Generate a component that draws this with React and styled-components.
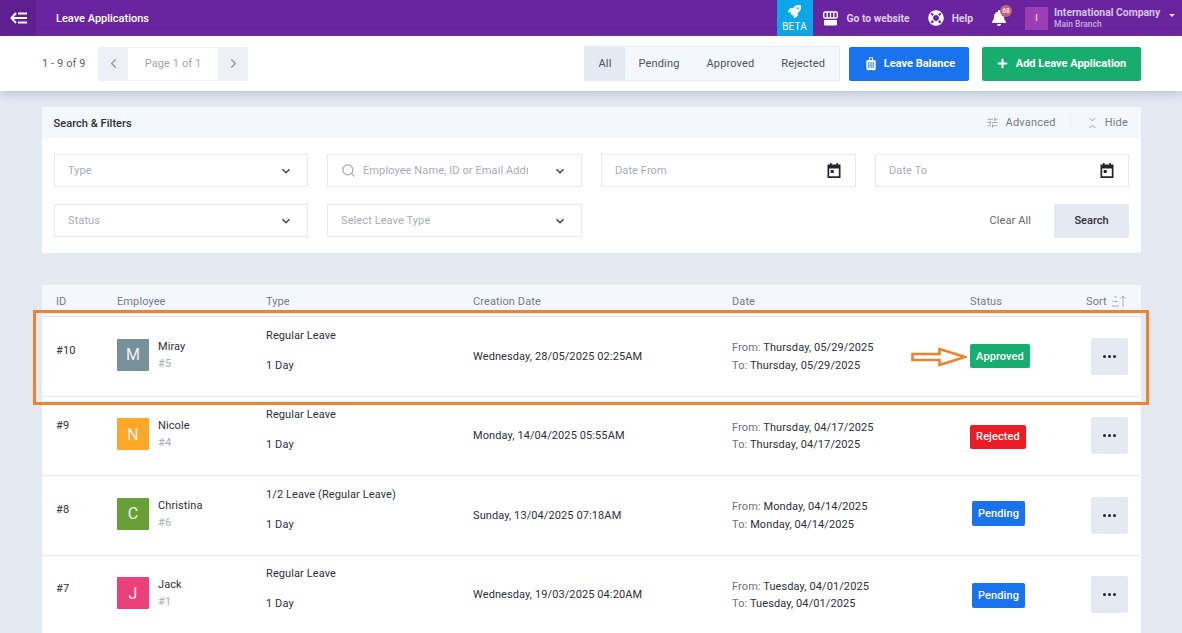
import React from 'react';
import styled, { createGlobalStyle } from 'styled-components';
import { FaBell, FaLifeRing, FaPlus, FaRocket } from 'react-icons/fa';
import { MdKeyboardArrowDown, MdLuggage, MdTune } from 'react-icons/md';
import { ChevronLeft, ChevronRight, Search } from 'lucide-react';

const GlobalStyle = createGlobalStyle`
  html, body {
    margin: 0;
    height: 633px;
    overflow: hidden;
    background: #e4e9f2;
    font-family: Roboto, "Liberation Sans", sans-serif;
  }
  * {
    box-sizing: border-box;
  }
`;

const Page = styled.div`
  width: 1182px;
  height: 633px;
  overflow: hidden;
`;

const TopBar = styled.header`
  display: flex;
  align-items: center;
  height: 36px;
  background: #6b249f;
  color: #fff;
`;

const BackButton = styled.div`
  display: flex;
  align-items: center;
  justify-content: center;
  width: 36px;
  height: 36px;
  background: #5f1f90;
`;

const PageTitle = styled.div`
  margin-left: 20px;
  padding-top: 1px;
  font-size: 11px;
  font-weight: 500;
  flex: 1;
`;

const BetaBox = styled.div`
  display: flex;
  flex-direction: column;
  align-items: center;
  justify-content: center;
  gap: 3px;
  width: 36px;
  height: 36px;
  background: #0ca6e9;
  font-size: 10px;
  letter-spacing: 0.1px;
`;

const TopLink = styled.div`
  display: flex;
  align-items: center;
  gap: 8px;
  margin-left: ${({ $offset }) => $offset}px;
  font-size: 10.3px;
  font-weight: 700;
  color: #dccdea;
`;

const BellWrap = styled.div`
  position: relative;
  display: flex;
  margin-left: 18px;
  color: #fff;
`;

const BellBadge = styled.span`
  position: absolute;
  top: -5px;
  left: 9px;
  width: 12px;
  height: 12px;
  border-radius: 50%;
  background: #c8607a;
  color: #f5e6ea;
  font-size: 6.5px;
  font-weight: 700;
  line-height: 12px;
  text-align: center;
`;

const CompanyAvatar = styled.div`
  display: flex;
  align-items: center;
  justify-content: center;
  width: 23px;
  height: 23px;
  margin-left: 18px;
  background: #9c3fb5;
  color: #e8d5ee;
  font-size: 9px;
  font-weight: 500;
`;

const CompanyInfo = styled.div`
  margin-left: 6px;
  width: 115px;
  color: #d5c5e4;
`;

const CompanyName = styled.div`
  font-size: 10.4px;
  font-weight: 700;
  line-height: 13px;
`;

const CompanyBranch = styled.div`
  font-size: 8.5px;
  font-weight: 500;
  line-height: 11px;
  color: #c5b0da;
`;

const Caret = styled.span`
  width: 0;
  height: 0;
  margin: 0 7px 6px 0;
  border-left: 3.5px solid transparent;
  border-right: 3.5px solid transparent;
  border-top: 3.5px solid #e4d8ee;
`;

const SubHeader = styled.div`
  position: relative;
  display: flex;
  align-items: center;
  height: 55px;
  padding: 0 41px 0 42px;
  background: #fff;
  box-shadow: 0 3px 10px rgba(110, 125, 160, 0.35);
`;

const Count = styled.div`
  width: 56px;
  font-size: 11px;
  letter-spacing: 0.1px;
  color: #5d6174;
`;

const Pager = styled.div`
  display: flex;
  height: 34px;
  border-radius: 2px;
  background: #edf1f5;
  flex: none;
`;

const PagerArrow = styled.div`
  display: flex;
  align-items: center;
  justify-content: center;
  width: 30px;
  color: #8e94a3;
`;

const PagerLabel = styled.div`
  display: flex;
  align-items: center;
  justify-content: center;
  width: 90px;
  margin: 1px 0;
  background: #fff;
  font-size: 11px;
  letter-spacing: 0.1px;
  color: #a3a6b2;
`;

const Tabs = styled.div`
  display: flex;
  height: 35px;
  margin-left: auto;
  padding-right: 0.5px;
  background: #f4f7fb;
  border: 1px solid #e9edf3;
  border-left: 0;
`;

const Tab = styled.div`
  display: flex;
  align-items: center;
  padding: ${({ $active }) => ($active ? '0 13.5px 0 15px' : '0 13.5px')};
  background: ${({ $active }) => ($active ? '#e4e9f2' : 'transparent')};
  font-size: 11px;
  letter-spacing: 0.15px;
  color: #4c5064;
`;

const ActionButton = styled.div`
  display: flex;
  align-items: center;
  justify-content: center;
  gap: ${({ $gap }) => $gap}px;
  width: ${({ $width }) => $width}px;
  height: 34px;
  margin-left: ${({ $offset }) => $offset}px;
  border-radius: 2px;
  background: ${({ $color }) => $color};
  color: #fff;
  font-size: 11px;
  font-weight: 700;
`;

const Content = styled.main`
  padding: 16px 41px 0 42px;
`;

const FilterCard = styled.section`
  background: #fff;
  height: 146px;
`;

const FilterHeader = styled.div`
  display: flex;
  align-items: center;
  height: 31px;
  padding: 0 13px 0 11.5px;
  background: #f4f7fb;
`;

const FilterTitle = styled.div`
  flex: 1;
  padding-top: 1px;
  font-size: 11px;
  font-weight: 500;
  letter-spacing: 0.05px;
  color: #2c2f3c;
`;

const FilterAction = styled.div`
  display: flex;
  align-items: center;
  gap: ${({ $gap }) => $gap}px;
  font-size: 11px;
  letter-spacing: 0.2px;
  color: #767a8c;

  svg {
    color: #a3a7b3;
  }
`;

const Divider = styled.span`
  width: 1px;
  height: 16px;
  margin: 0 18px 0 14px;
  background: #eceff4;
`;

const FilterGrid = styled.div`
  display: grid;
  grid-template-columns: 254px 255px 255px 254px;
  grid-auto-rows: 33px;
  column-gap: 19px;
  row-gap: 17px;
  padding: 16px 12px;
`;

const Field = styled.div`
  display: flex;
  align-items: center;
  padding: 0 13.5px 0 13px;
  border: 1px solid #e6e9ee;
  font-size: 11px;
  letter-spacing: 0.1px;
  color: #a9abb9;
`;

const FieldText = styled.span`
  flex: 1;
  min-width: 0;
  overflow: hidden;
  white-space: nowrap;
`;

const SearchText = styled.span`
  flex: none;
  width: 165px;
  margin-right: auto;
  overflow: hidden;
  white-space: nowrap;
`;

const SearchIcon = styled(Search)`
  flex: none;
  margin-right: 7px;
  color: #a5a8b5;
`;

const DarkArrow = styled(MdKeyboardArrowDown)`
  flex: none;
  color: #3a3d4c;
`;

const CalendarSvg = styled.svg`
  flex: none;
  margin-right: 1px;
  color: #23252f;
`;

const FilterButtons = styled.div`
  grid-column: 3 / span 2;
  display: flex;
  align-items: center;
  justify-content: flex-end;
`;

const ClearAll = styled.div`
  margin-right: 23px;
  font-size: 11px;
  letter-spacing: 0.1px;
  color: #636779;
`;

const SearchButton = styled.div`
  display: flex;
  align-items: center;
  justify-content: center;
  width: 75px;
  height: 34px;
  border-radius: 2px;
  background: #e4e9f2;
  color: #2c2f3c;
  font-size: 11px;
  font-weight: 500;
`;

const Table = styled.section`
  margin-top: 32px;
  background: #fff;
`;

const columns = '61px 149px 207px 259px 238px 121px 1fr';

const HeadRow = styled.div`
  display: grid;
  grid-template-columns: ${columns};
  align-items: center;
  height: 32px;
  padding: 1px 0 0 14px;
  background: #f4f7fb;
  border-bottom: 1px solid #e6e9ee;
  font-size: 11px;
  letter-spacing: 0.1px;
  color: #767a8c;
`;

const SortCell = styled.div`
  display: flex;
  align-items: center;
  gap: 4px;
  margin-left: -5px;

  svg {
    color: #a9adba;
  }
`;

const Row = styled.div`
  position: relative;
  display: grid;
  grid-template-columns: ${columns};
  align-items: center;
  height: 79.5px;
  padding-left: 14px;
  border-bottom: 1px solid #e6e9ee;
  font-size: 11px;
  letter-spacing: 0.1px;
  color: #2c2f3c;
`;

const IdCell = styled.div`
  padding-bottom: ${({ $lift }) => $lift}px;
`;

const Employee = styled.div`
  display: flex;
  gap: 9px;
  padding-bottom: 3px;
`;

const Avatar = styled.div`
  display: flex;
  align-items: center;
  justify-content: center;
  width: 32px;
  height: 32px;
  border-radius: 1px;
  background: ${({ $color }) => $color};
  color: #eef2f0;
  font-size: 16px;
`;

const EmployeeInfo = styled.div`
  padding-top: 1px;
`;

const EmployeeName = styled.div`
  line-height: 13px;
  margin-bottom: 4px;
`;

const EmployeeNo = styled.div`
  line-height: 13px;
  color: #a9abb9;
`;

const TypeCell = styled.div`
  display: flex;
  flex-direction: column;
  gap: 17px;
  padding-bottom: 12px;
  line-height: 13px;
`;

const DateCell = styled.div`
  line-height: 17.5px;
  padding-top: 1px;
`;

const DateLabel = styled.span`
  color: #6c7082;
`;

const StatusCell = styled.div`
  display: flex;
  padding: ${({ $top, $bottom }) => `${$top}px 0 ${$bottom}px`};
`;

const StatusBadge = styled.div`
  display: inline-flex;
  align-items: center;
  justify-content: center;
  width: ${({ $width }) => $width}px;
  height: ${({ $height }) => $height}px;
  margin-left: ${({ $offset }) => $offset}px;
  border-radius: 2px;
  background: ${({ $color }) => $color};
  color: #fff;
  font-size: 11px;
  font-weight: 500;
`;

const DotsButton = styled.div`
  display: flex;
  align-items: center;
  justify-content: center;
  gap: 2px;
  width: 37px;
  height: 37px;
  border-radius: 2px;
  background: #e4e9f2;
`;

const Dot = styled.span`
  width: 3px;
  height: 3px;
  border-radius: 50%;
  background: #23252f;
`;

const Highlight = styled.div`
  position: absolute;
  left: -9px;
  top: -7px;
  width: 1116px;
  height: 95px;
  border: 3px solid #f0812f;
  pointer-events: none;
`;

const HighlightArrow = styled.svg`
  position: absolute;
  left: 869px;
  top: 30px;
`;

const statusStyles = {
  Approved: { color: '#17ad6f', width: 60, height: 24, offset: 0 },
  Rejected: { color: '#ec1c24', width: 56, height: 24, offset: 0 },
  Pending: { color: '#1a73ee', width: 53, height: 25, offset: 2 },
};

const rows = [
  {
    id: 10,
    name: 'Miray',
    no: 5,
    color: '#78909c',
    type: 'Regular Leave',
    created: 'Wednesday, 28/05/2025 02:25AM',
    date: 'Thursday, 05/29/2025',
    status: 'Approved',
    idLift: 12,
    badgeTop: 0,
    badgeBottom: 0,
  },
  {
    id: 9,
    name: 'Nicole',
    no: 4,
    color: '#ffa726',
    type: 'Regular Leave',
    created: 'Monday, 14/04/2025 05:55AM',
    date: 'Thursday, 04/17/2025',
    status: 'Rejected',
    idLift: 21,
    badgeTop: 2,
    badgeBottom: 0,
  },
  {
    id: 8,
    name: 'Christina',
    no: 6,
    color: '#689f38',
    type: '1/2 Leave (Regular Leave)',
    created: 'Sunday, 13/04/2025 07:18AM',
    date: 'Monday, 04/14/2025',
    status: 'Pending',
    idLift: 11,
    badgeTop: 0,
    badgeBottom: 4,
  },
  {
    id: 7,
    name: 'Jack',
    no: 1,
    color: '#ec407a',
    type: 'Regular Leave',
    created: 'Wednesday, 19/03/2025 04:20AM',
    date: 'Tuesday, 04/01/2025',
    status: 'Pending',
    idLift: 13,
    badgeTop: 2,
    badgeBottom: 0,
  },
];

const BackIcon = () => (
  <svg width="17" height="12" viewBox="0 0 17 12" fill="none" stroke="#fff" strokeWidth="2">
    <path d="M6 1 1.5 6 6 11" />
    <path d="M2 6h15M8 1.5h9M8 10.5h9" />
  </svg>
);

const StoreIcon = () => (
  <svg width="17" height="15" viewBox="0 0 17 15" fill="none" stroke="#fff">
    <rect x="1.7" y="1" width="13.6" height="6" rx="1.6" strokeWidth="1.4" />
    <path d="M5.2 1v6M8.5 1v6M11.8 1v6" strokeWidth="1.3" />
    <path d="M2 9h13v4.6a1 1 0 0 1-1 1H3a1 1 0 0 1-1-1z" fill="#fff" stroke="none" />
  </svg>
);

const SortIcon = () => (
  <svg width="15" height="12" viewBox="0 0 15 12" fill="none" stroke="currentColor">
    <path d="M3 2h3M1.5 6.5h5M1 11h7" />
    <path d="M12 12V1M9.5 3.5 12 1l2.5 2.5" />
  </svg>
);

const CollapseIcon = () => (
  <svg width="7" height="12" viewBox="0 0 7 12" fill="none" stroke="currentColor">
    <path d="M.7 1 3.5 4 6.3 1M.7 11l2.8-3 2.8 3" />
  </svg>
);

const CalendarIcon = () => (
  <CalendarSvg width="14" height="15" viewBox="0 0 14 15">
    <path d="M3 0h1.6v2H3zM9.4 0H11v2H9.4z" fill="currentColor" />
    <path
      fillRule="evenodd"
      d="M.5 1.5h13V15H.5zM2.2 5.4V13.3h9.6V5.4z"
      fill="currentColor"
    />
    <rect x="3.7" y="7" width="3" height="3" fill="currentColor" />
  </CalendarSvg>
);

const Filter = ({ label }) => (
  <Field>
    <FieldText>{label}</FieldText>
    <DarkArrow size={16} />
  </Field>
);

const DateFilter = ({ label }) => (
  <Field>
    <FieldText>{label}</FieldText>
    <CalendarIcon />
  </Field>
);

const App = () => (
  <Page>
    <GlobalStyle />
    <TopBar>
      <BackButton>
        <BackIcon />
      </BackButton>
      <PageTitle>Leave Applications</PageTitle>
      <BetaBox>
        <FaRocket size={13} />
        BETA
      </BetaBox>
      <TopLink $offset={9}>
        <StoreIcon />
        Go to website
      </TopLink>
      <TopLink $offset={18}>
        <FaLifeRing size={16} color="#fff" />
        Help
      </TopLink>
      <BellWrap>
        <FaBell size={16} />
        <BellBadge>68</BellBadge>
      </BellWrap>
      <CompanyAvatar>I</CompanyAvatar>
      <CompanyInfo>
        <CompanyName>International Company</CompanyName>
        <CompanyBranch>Main Branch</CompanyBranch>
      </CompanyInfo>
      <Caret />
    </TopBar>

    <SubHeader>
      <Count>1 - 9 of 9</Count>
      <Pager>
        <PagerArrow>
          <ChevronLeft size={15} />
        </PagerArrow>
        <PagerLabel>Page 1 of 1</PagerLabel>
        <PagerArrow>
          <ChevronRight size={15} />
        </PagerArrow>
      </Pager>
      <Tabs>
        <Tab $active>All</Tab>
        <Tab>Pending</Tab>
        <Tab>Approved</Tab>
        <Tab>Rejected</Tab>
      </Tabs>
      <ActionButton $color="#1a73ee" $width={120} $offset={9} $gap={5}>
        <MdLuggage size={16} />
        Leave Balance
      </ActionButton>
      <ActionButton $color="#17ad6f" $width={159} $offset={13} $gap={8}>
        <FaPlus size={11} />
        Add Leave Application
      </ActionButton>
    </SubHeader>

    <Content>
      <FilterCard>
        <FilterHeader>
          <FilterTitle>Search &amp; Filters</FilterTitle>
          <FilterAction $gap={7}>
            <MdTune size={13} />
            Advanced
          </FilterAction>
          <Divider />
          <FilterAction $gap={9}>
            <CollapseIcon />
            Hide
          </FilterAction>
        </FilterHeader>
        <FilterGrid>
          <Filter label="Type" />
          <Field>
            <SearchIcon size={15} />
            <SearchText>Employee Name, ID or Email Address</SearchText>
            <DarkArrow size={16} />
          </Field>
          <DateFilter label="Date From" />
          <DateFilter label="Date To" />
          <Filter label="Status" />
          <Filter label="Select Leave Type" />
          <FilterButtons>
            <ClearAll>Clear All</ClearAll>
            <SearchButton>Search</SearchButton>
          </FilterButtons>
        </FilterGrid>
      </FilterCard>

      <Table>
        <HeadRow>
          <div>ID</div>
          <div>Employee</div>
          <div>Type</div>
          <div>Creation Date</div>
          <div>Date</div>
          <div>Status</div>
          <SortCell>
            Sort
            <SortIcon />
          </SortCell>
        </HeadRow>
        {rows.map((row, index) => {
          const { color, width, height, offset } = statusStyles[row.status];
          return (
            <Row key={row.id}>
              <IdCell $lift={row.idLift}>#{row.id}</IdCell>
              <Employee>
                <Avatar $color={row.color}>{row.name[0]}</Avatar>
                <EmployeeInfo>
                  <EmployeeName>{row.name}</EmployeeName>
                  <EmployeeNo>#{row.no}</EmployeeNo>
                </EmployeeInfo>
              </Employee>
              <TypeCell>
                <div>{row.type}</div>
                <div>1 Day</div>
              </TypeCell>
              <div>{row.created}</div>
              <DateCell>
                <div>
                  <DateLabel>From:</DateLabel> {row.date}
                </div>
                <div>
                  <DateLabel>To:</DateLabel> {row.date}
                </div>
              </DateCell>
              <StatusCell $top={row.badgeTop} $bottom={row.badgeBottom}>
                <StatusBadge $color={color} $width={width} $height={height} $offset={offset}>
                  {row.status}
                </StatusBadge>
              </StatusCell>
              <DotsButton>
                <Dot />
                <Dot />
                <Dot />
              </DotsButton>
              {index === 0 && (
                <>
                  <Highlight />
                  <HighlightArrow
                    width="56"
                    height="20"
                    viewBox="0 0 56 20"
                    fill="#fff"
                    stroke="#f0812f"
                    strokeWidth="2.6"
                  >
                    <path d="M1.5 7h27V2L54 10 28.5 18v-5H1.5z" />
                  </HighlightArrow>
                </>
              )}
            </Row>
          );
        })}
      </Table>
    </Content>
  </Page>
);

export default App;
